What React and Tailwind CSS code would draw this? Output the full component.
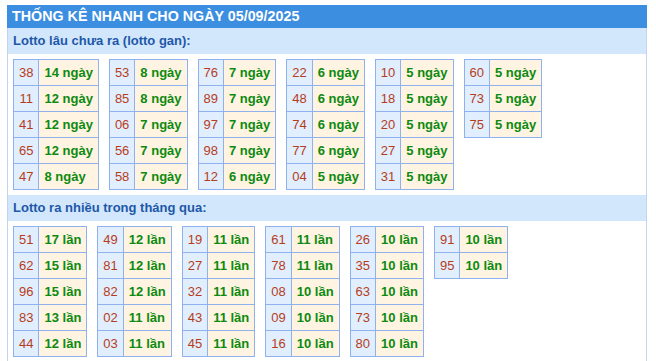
import React from "react";

const gan = [
  [["38", "14 ngày"], ["11", "12 ngày"], ["41", "12 ngày"], ["65", "12 ngày"], ["47", "8 ngày"]],
  [["53", "8 ngày"], ["85", "8 ngày"], ["06", "7 ngày"], ["56", "7 ngày"], ["58", "7 ngày"]],
  [["76", "7 ngày"], ["89", "7 ngày"], ["97", "7 ngày"], ["98", "7 ngày"], ["12", "6 ngày"]],
  [["22", "6 ngày"], ["48", "6 ngày"], ["74", "6 ngày"], ["77", "6 ngày"], ["04", "5 ngày"]],
  [["10", "5 ngày"], ["18", "5 ngày"], ["20", "5 ngày"], ["27", "5 ngày"], ["31", "5 ngày"]],
  [["60", "5 ngày"], ["73", "5 ngày"], ["75", "5 ngày"]],
];

const nhieu = [
  [["51", "17 lần"], ["62", "15 lần"], ["96", "15 lần"], ["83", "13 lần"], ["44", "12 lần"]],
  [["49", "12 lần"], ["81", "12 lần"], ["82", "12 lần"], ["02", "11 lần"], ["03", "11 lần"]],
  [["19", "11 lần"], ["27", "11 lần"], ["32", "11 lần"], ["43", "11 lần"], ["45", "11 lần"]],
  [["61", "11 lần"], ["78", "11 lần"], ["08", "10 lần"], ["09", "10 lần"], ["16", "10 lần"]],
  [["26", "10 lần"], ["35", "10 lần"], ["63", "10 lần"], ["73", "10 lần"], ["80", "10 lần"]],
  [["91", "10 lần"], ["95", "10 lần"]],
];

function StatTable({ rows }) {
  return (
    <table className="border-collapse text-[13px] leading-none">
      <tbody>
        {rows.map(([num, val]) => (
          <tr key={num} className="h-[26px]">
            <td className="border border-[#8fb1ee] bg-[#e1eefd] px-[5px] text-center text-[#b53d1c]">
              {num}
            </td>
            <td className="border border-[#8fb1ee] bg-[#fff3e1] px-[5px] font-bold text-[#0d8a10] whitespace-nowrap">
              {val}
            </td>
          </tr>
        ))}
      </tbody>
    </table>
  );
}

function Section({ title, groups }) {
  return (
    <div>
      <div className="h-[26px] bg-[#d3e7fc] pl-[5px] flex items-center text-[13px] font-bold text-[#1d58a8]">
        {title}
      </div>
      <div className="flex items-start gap-[10px] px-[5px] pt-[5px] pb-[5px]">
        {groups.map((g, i) => (
          <StatTable key={i} rows={g} />
        ))}
      </div>
    </div>
  );
}

export default function App() {
  return (
    <div
      className="bg-white w-[656px] h-[361px] pt-[5px] pl-[7px]"
      style={{ fontFamily: '"Liberation Sans", Arial, sans-serif' }}
    >
      <div className="w-[640px] h-[356px] border-x border-[#c3d5ec]">
        <div className="h-[23px] bg-[#3b8ee0] -mx-px pl-[5px] flex items-center text-[14.3px] font-bold text-white">
          THỐNG KÊ NHANH CHO NGÀY 05/09/2025
        </div>
        <Section title="Lotto lâu chưa ra (lotto gan):" groups={gan} />
        <Section title="Lotto ra nhiều trong tháng qua:" groups={nhieu} />
      </div>
    </div>
  );
}
